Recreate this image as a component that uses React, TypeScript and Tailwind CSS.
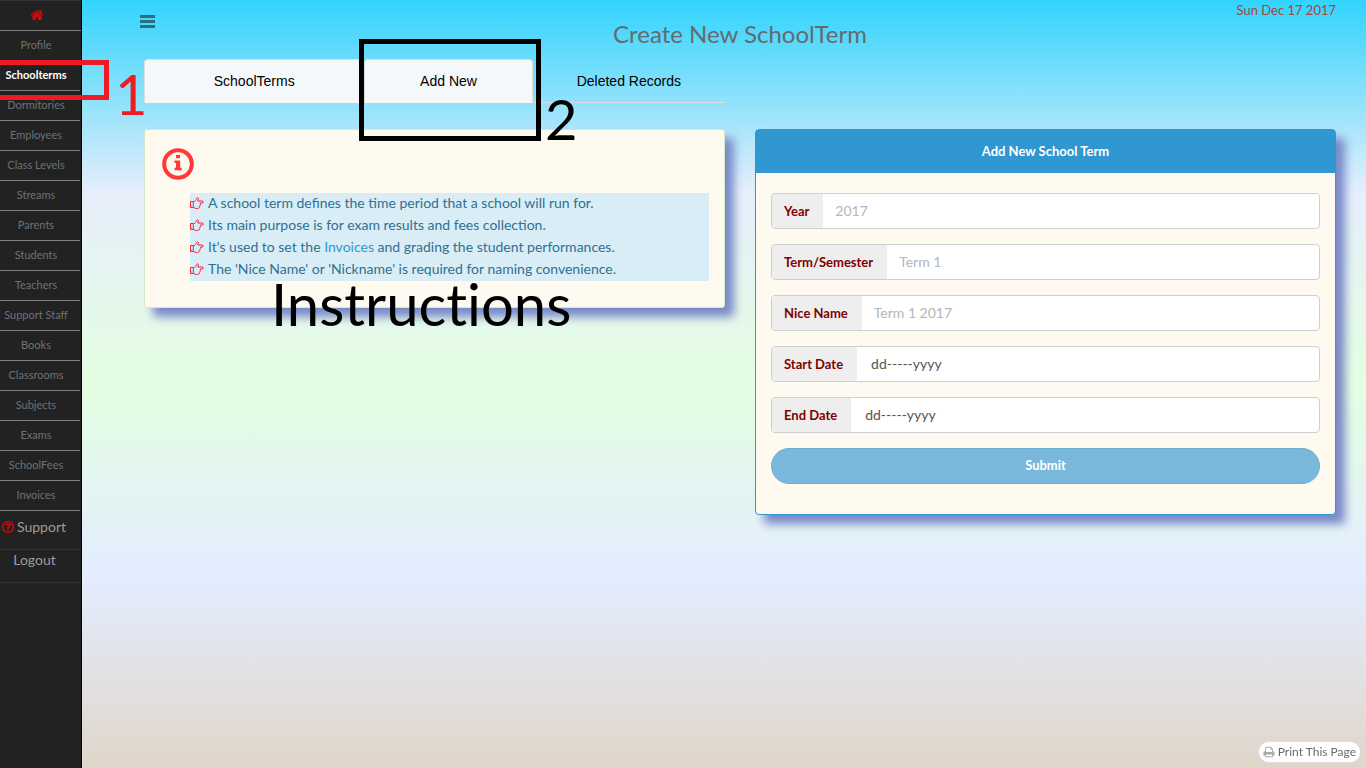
import React from "react";

const navItems = [
  "Profile",
  "Schoolterms",
  "Dormitories",
  "Employees",
  "Class Levels",
  "Streams",
  "Parents",
  "Students",
  "Teachers",
  "Support Staff",
  "Books",
  "Classrooms",
  "Subjects",
  "Exams",
  "SchoolFees",
  "Invoices",
];

const fields = [
  { id: "year", label: "Year", hint: "2017", date: false },
  { id: "term", label: "Term/Semester", hint: "Term 1", date: false },
  { id: "nice-name", label: "Nice Name", hint: "Term 1 2017", date: false },
  { id: "start-date", label: "Start Date", hint: "dd-----yyyy", date: true },
  { id: "end-date", label: "End Date", hint: "dd-----yyyy", date: true },
];

const instructions: React.ReactNode[] = [
  "A school term defines the time period that a school will run for.",
  "Its main purpose is for exam results and fees collection.",
  <>
    It's used to set the <a href="#invoices" className="text-[#3097d1]">Invoices</a> and grading the student
    performances.
  </>,
  "The 'Nice Name' or 'Nickname' is required for naming convenience.",
];

function HomeIcon() {
  return (
    <svg viewBox="0 0 1792 1792" className="size-3.5 fill-[#d3080c]" aria-hidden="true">
      <path d="M1472 992v480q0 26-19 45t-45 19h-384v-384h-256v384h-384q-26 0-45-19t-19-45v-480q0-1 .5-3t.5-3l575-474 575 474q1 2 1 6zm223-69l-62 74q-8 9-21 11h-3q-13 0-21-7l-692-577-692 577q-12 8-24 7-13-2-21-11l-62-74q-8-10-7-23.5t11-21.5l719-599q32-26 76-26t76 26l244 204v-195q0-14 9-23t23-9h192q14 0 23 9t9 23v408l219 182q10 8 11 21.5t-7 23.5z" />
    </svg>
  );
}

function PrintIcon() {
  return (
    <svg viewBox="0 0 1792 1792" className="size-3 fill-[#aaa]" aria-hidden="true">
      <path d="M448 1536h896v-256h-896v256zm0-640h896v-384h-160q-40 0-68-28t-28-68v-160h-640v640zm1152 64q0-26-19-45t-45-19-45 19-19 45 19 45 45 19 45-19 19-45zm128 0v416q0 13-9.5 22.5t-22.5 9.5h-224v160q0 40-28 68t-68 28h-960q-40 0-68-28t-28-68v-160h-224q-13 0-22.5-9.5t-9.5-22.5v-416q0-79 56.5-135.5t135.5-56.5h64v-544q0-40 28-68t68-28h672q40 0 88 20t76 48l152 152q28 28 48 76t20 88v256h64q79 0 135.5 56.5t56.5 135.5z" />
    </svg>
  );
}

function HandIcon() {
  return (
    <svg viewBox="0 0 14 14" className="h-3.5 w-3.5 shrink-0 fill-none stroke-[#ff1f3d]" aria-hidden="true">
      <path d="M.5 5.5h2.8v6H.5z" />
      <path d="M3.3 5.5h1C5.6 5 6 3.8 6.5 2.6 7 1.2 8.6 1.7 8.4 3.1 8.3 3.9 7.9 4.4 7.7 5h4.4c1.6 0 1.6 2.1 0 2.1H10c.8.6.6 1.7-.2 1.9.5.7.2 1.6-.5 1.8.1 1-.5 1.7-1.8 1.7H6.2c-1.2 0-1.8-.9-2.9-1" />
      <path d="M1.5 10h.6" />
    </svg>
  );
}

function InfoIcon() {
  return (
    <svg viewBox="0 0 32 32" className="size-8" aria-hidden="true">
      <circle cx="16" cy="16" r="13.8" className="fill-none stroke-[#ff3838] stroke-[4]" />
      <path d="M14 7h4v3.2h-4zM12.5 12.5h5.7v7.2h1.5v2.5h-7.2v-2.5H14v-4.6h-1.5z" className="fill-[#ff3838]" />
    </svg>
  );
}

function HelpIcon() {
  return (
    <svg viewBox="0 0 14 14" className="size-3.5 fill-none stroke-[#d3080c]" aria-hidden="true">
      <circle cx="7" cy="7" r="5.4" strokeWidth="1.5" />
      <path d="M5 5.5C5.2 3.5 9 3.7 9 5.6 9 7 7 6.9 7 8.4M7 9.3v1.5" strokeWidth="1.7" />
    </svg>
  );
}

function Sidebar() {
  return (
    <nav className="relative w-[82px] shrink-0 border-r border-black bg-[#222] text-center">
      <a href="#home" aria-label="Home" className="flex h-[31px] items-center justify-center border-y border-t-[#333] border-b-[#808080] pr-2 pb-0.5">
        <HomeIcon />
      </a>
      <ul className="mr-px">
        {navItems.map((item) => (
          <li key={item} className="border-b border-[#808080]">
            <a
              href={`#${item}`}
              className={
                item === "Schoolterms"
                  ? "block h-[29px] pr-2 text-[11px] leading-7 font-bold whitespace-nowrap text-white"
                  : "block h-[29px] pr-2 text-[11px] leading-7 whitespace-nowrap text-[#6e7275]"
              }
            >
              {item}
            </a>
          </li>
        ))}
      </ul>
      <a href="#support" className="flex h-[39px] items-center gap-0.5 border-b border-[#333] pb-1.5 pl-px text-sm text-[#9d9d9d]">
        <HelpIcon />
        Support
      </a>
      <a href="#logout" className="block h-[33px] border-b border-[#333] pr-3 text-sm leading-5 text-[#9d9d9d]">
        Logout
      </a>
      <div className="pointer-events-none absolute top-[60px] -left-2 h-10 w-[117px] border-5 border-[#ed1c24]" />
      <span className="pointer-events-none absolute top-[62px] left-[115px] text-[56px] leading-[64px] text-[#ed1c24]">1</span>
    </nav>
  );
}

export default function App() {
  return (
    <div className="flex min-h-screen bg-[linear-gradient(180deg,#31d4fd_0%,#e6eefb_25%,#e4fee1_50%,#e3edff_75%,#e0d6ca_100%)] font-[Lato,sans-serif]">
      <Sidebar />
      <main className="min-w-0 flex-1 pr-[30px] pl-[62px]">
        <header className="grid h-[59px] grid-cols-[1fr_auto_1fr] items-start">
          <button type="button" aria-label="Toggle menu" className="-ml-1 w-4 pt-[15px]">
            <svg viewBox="0 0 15 13" className="h-[13px] w-[15px] fill-[#2c7080]" aria-hidden="true">
              <path d="M0 0h15v3H0zM0 5h15v3H0zM0 10h15v3H0z" />
            </svg>
          </button>
          <h1 className="pt-[18px] text-2xl leading-8 text-[#636b6f]">Create New SchoolTerm</h1>
          <time className="justify-self-end text-[13px] leading-5 text-[#a94442]">Sun Dec 17 2017</time>
        </header>

        <div className="grid grid-cols-2 gap-x-[30px]">
          <section>
            <div className="relative">
              <div className="grid h-11 grid-cols-[220fr_168fr_192fr] font-['Liberation_Sans',sans-serif] text-sm text-black">
                <a href="#terms" className="flex items-center justify-center rounded-t border border-b-0 border-[#ddd] bg-[#f5f8fa] pb-px">SchoolTerms</a>
                <a href="#new" className="flex items-center justify-center rounded-t border border-b-0 border-[#ddd] bg-[#f5f8fa] pb-px">Add New</a>
                <a href="#deleted" className="flex items-center justify-center border-b border-[#ddd]">Deleted Records</a>
              </div>
              <div className="pointer-events-none absolute -top-5 left-[215px] z-10 h-[102px] w-[182px] border-5 border-black" />
              <span className="pointer-events-none absolute top-7 left-[401px] z-10 text-[56px] leading-[64px] text-black">2</span>
            </div>

            <div className="relative mt-[26px] rounded-[3px] border border-[#d6e9c6] bg-[#fffaf0] px-[15px] pt-[18px] pb-[26px] shadow-[9px_9px_10px_#788ac8]">
              <div className="pl-0.5">
                <InfoIcon />
              </div>
              <ul className="mt-[13px] ml-[30px] bg-[#d9edf7] text-sm leading-[22px] text-[#31708f]">
                {instructions.map((text, index) => (
                  <li key={index} className="flex h-[22px] items-center gap-1 pb-0.5">
                    <HandIcon />
                    <span>{text}</span>
                  </li>
                ))}
              </ul>
              <span className="pointer-events-none absolute top-[142px] left-[126px] text-[58px] leading-[64px] text-black [font-variant-ligatures:none]">Instructions</span>
            </div>
          </section>

          <section className="mt-[70px] rounded border border-[#3097d1] bg-[#fffaf0] shadow-[9px_9px_10px_#788ac8]">
            <h2 className="h-[43px] bg-[#3097d1] text-center text-[13px] leading-[42px] font-bold text-white">Add New School Term</h2>
            <form className="flex flex-col gap-[15px] px-[15px] pt-5 pb-[30px]" onSubmit={(event) => event.preventDefault()}>
              {fields.map((field) => (
                <div key={field.id} className="flex h-9 overflow-hidden rounded border border-[#ccd0d2] bg-white text-sm">
                  <label htmlFor={field.id} className="flex items-center bg-[#eee] pr-3.5 pl-3 text-[13px] font-bold text-[#800000]">
                    {field.label}
                  </label>
                  <input
                    id={field.id}
                    type="text"
                    placeholder={field.hint}
                    className={
                      field.date
                        ? "min-w-0 flex-1 px-3.5 outline-none placeholder:text-[#555]"
                        : "min-w-0 flex-1 px-3 outline-none placeholder:text-[#b1b7ba]"
                    }
                  />
                </div>
              ))}
              <button type="submit" className="h-9 rounded-full border border-[#6eb0d3] bg-[#79b7db] text-[13px] font-bold text-white">
                Submit
              </button>
            </form>
          </section>
        </div>
      </main>
      <button type="button" className="fixed right-[5px] bottom-[5px] flex h-[22px] items-center gap-[3px] rounded-full border border-[#ddd] bg-white px-1 pb-px text-xs whitespace-nowrap text-[#636b6f]">
        <PrintIcon />
        Print This Page
      </button>
    </div>
  );
}
